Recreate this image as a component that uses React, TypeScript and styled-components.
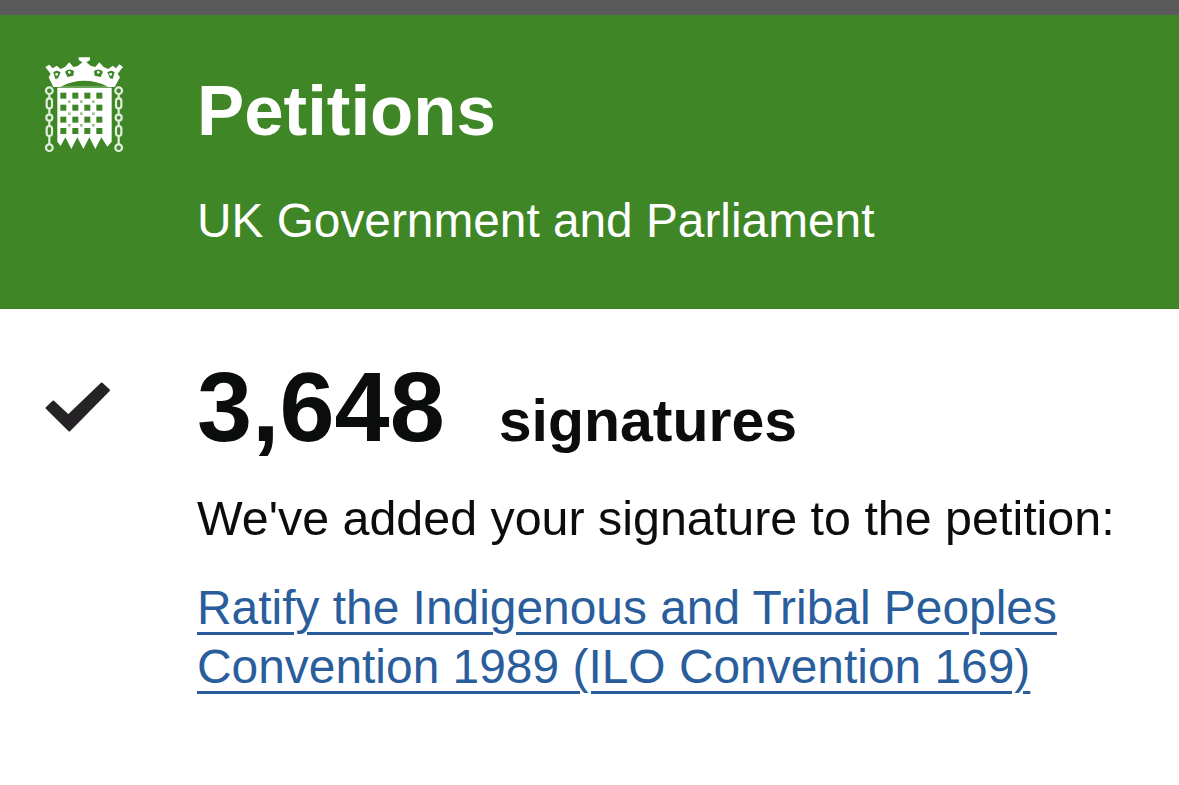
import React from "react";
import styled, { createGlobalStyle } from "styled-components";

const GREEN = "#3e8626";

const Global = createGlobalStyle`
  html, body { margin: 0; padding: 0; background: #fff; }
  body { font-family: "Liberation Sans", Arial, sans-serif; overflow: hidden; }
`;
const Page = styled.div`
  width: 1179px;
  height: 785px;
  overflow: hidden;
  background: #fff;
`;
const TopBar = styled.div`
  height: 15px;
  background: #5a5a5a;
`;
const Header = styled.header`
  height: 294px;
  box-sizing: border-box;
  background: ${GREEN};
  color: #fff;
  display: grid;
  grid-template-columns: 197px 1fr;
  padding-top: 42px;
`;
const LogoCell = styled.div`
  padding-left: 45px;
`;
const HeaderText = styled.div`
  padding-top: 13px;
`;
const Title = styled.h1`
  margin: 0;
  font-size: 70.8px;
  line-height: 81px;
  font-weight: 700;
`;
const Subtitle = styled.p`
  margin: 43px 0 0;
  font-size: 47.8px;
  line-height: 53px;
  font-weight: 400;
`;
const Body = styled.main`
  display: grid;
  grid-template-columns: 197px 1fr;
  padding-top: 52px;
`;
const CheckCell = styled.div`
  padding-left: 45px;
  padding-top: 20px;
`;
const CountRow = styled.div`
  display: flex;
  align-items: baseline;
  gap: 54px;
  color: #0b0c0c;
  font-weight: 700;
  line-height: 92px;
`;
const Count = styled.span`
  font-size: 99px;
`;
const CountLabel = styled.span`
  font-size: 59px;
`;
const Message = styled.p`
  margin: 24px 0 0;
  font-size: 48.4px;
  line-height: 54px;
  color: #0b0c0c;
  white-space: nowrap;
`;
const PetitionLink = styled.a`
  display: block;
  margin-top: 33px;
  font-size: 47.9px;
  line-height: 59px;
  color: #2a5d9c;
  white-space: nowrap;
  text-decoration: underline;
  text-decoration-thickness: 3px;
  text-underline-offset: 8px;
`;

const Chain = ({ x }: { x: number }) => (
  <g fill="none" stroke="#e4efdf" strokeWidth="6.500">
    <circle cx={x} cy={137} r="10" />
    <rect x={x - 8} y={160} width="16" height="30" rx="8" />
    <circle cx={x} cy={218} r="9" />
    <rect x={x - 8} y={243} width="16" height="30" rx="8" />
    <circle cx={x} cy={308} r="10" />
    <path d={`M${x} 148v11M${x} 191v17M${x} 228v14M${x} 274v24`} />
  </g>
);

const Logo = () => {
  const xs = [100, 136, 172, 208];
  const ys = [152, 188, 224, 258];
  const dotXs = [118, 154, 190];
  const dotYs = [170, 206, 241];
  return (
    <svg width="78" height="96" viewBox="45 36 234 288" role="img" aria-label="Portcullis">
      {/* crown */}
      <path
        fill="#fff"
        d="M70 126 L56 97 L62 86 L46 66 L58 59 L68 70 L80 62 L92 72 L105 66 L118 52 L130 66 L143 63 L157 52 L146 45 L146 37 L180 37 L180 45 L169 52 L183 63 L196 66 L208 52 L221 66 L235 72 L248 62 L258 70 L268 58 L279 66 L263 86 L270 97 L254 126 Z"
      />
      <path
        fill={GREEN}
        d="M70 82 Q80 72 92 82 L84 100 L76 102 Z M105 80 Q118 68 132 78 L130 92 L112 96 Z M192 78 Q206 68 219 80 L212 96 L194 92 Z M232 82 Q244 72 254 82 L248 102 L240 100 Z"
      />
      <path fill={GREEN} d="M92 125 Q163 90 234 125 Z" />
      <circle cx="80" cy="88" r="4" fill="#fff" />
      <circle cx="118" cy="82" r="4" fill="#fff" />
      <circle cx="205" cy="82" r="4" fill="#fff" />
      <circle cx="242" cy="88" r="4" fill="#fff" />
      {/* portcullis */}
      <path
        fill="#fff"
        d="M82 128 H245 V290 L232 305 L214 277 L196 312 L178 277 L160 312 L142 277 L124 312 L106 277 L92 303 L82 290 Z"
      />
      {xs.map((x) =>
        ys.map((y) => (
          <rect key={`${x}-${y}`} x={x - 9} y={y - 9} width="18" height="18" fill={GREEN} />
        ))
      )}
      {dotXs.map((x) =>
        dotYs.map((y) => (
          <rect key={`d${x}-${y}`} x={x - 4} y={y - 4} width="8" height="8" fill="#9dc48d" />
        ))
      )}
      <Chain x={58} />
      <Chain x={266} />
    </svg>
  );
};

const Check = () => (
  <svg width="66" height="52" viewBox="0 0 66 52" aria-hidden="true">
    <path
      fill="#252326"
      stroke="#252326"
      strokeWidth="2"
      strokeLinejoin="round"
      d="M1.500 27 L8.300 20.500 L23.300 34.500 L56.700 2.500 L64 9.300 L24.300 49.500 Z"
    />
  </svg>
);

export default function App() {
  return (
    <Page>
      <Global />
      <TopBar />
      <Header>
        <LogoCell>
          <Logo />
        </LogoCell>
        <HeaderText>
          <Title>Petitions</Title>
          <Subtitle>UK Government and Parliament</Subtitle>
        </HeaderText>
      </Header>
      <Body>
        <CheckCell>
          <Check />
        </CheckCell>
        <div>
          <CountRow>
            <Count>3,648</Count>
            <CountLabel>signatures</CountLabel>
          </CountRow>
          <Message>We've added your signature to the petition:</Message>
          <PetitionLink href="#">
            Ratify the Indigenous and Tribal Peoples
            <br />
            Convention 1989 (ILO Convention 169)
          </PetitionLink>
        </div>
      </Body>
    </Page>
  );
}
